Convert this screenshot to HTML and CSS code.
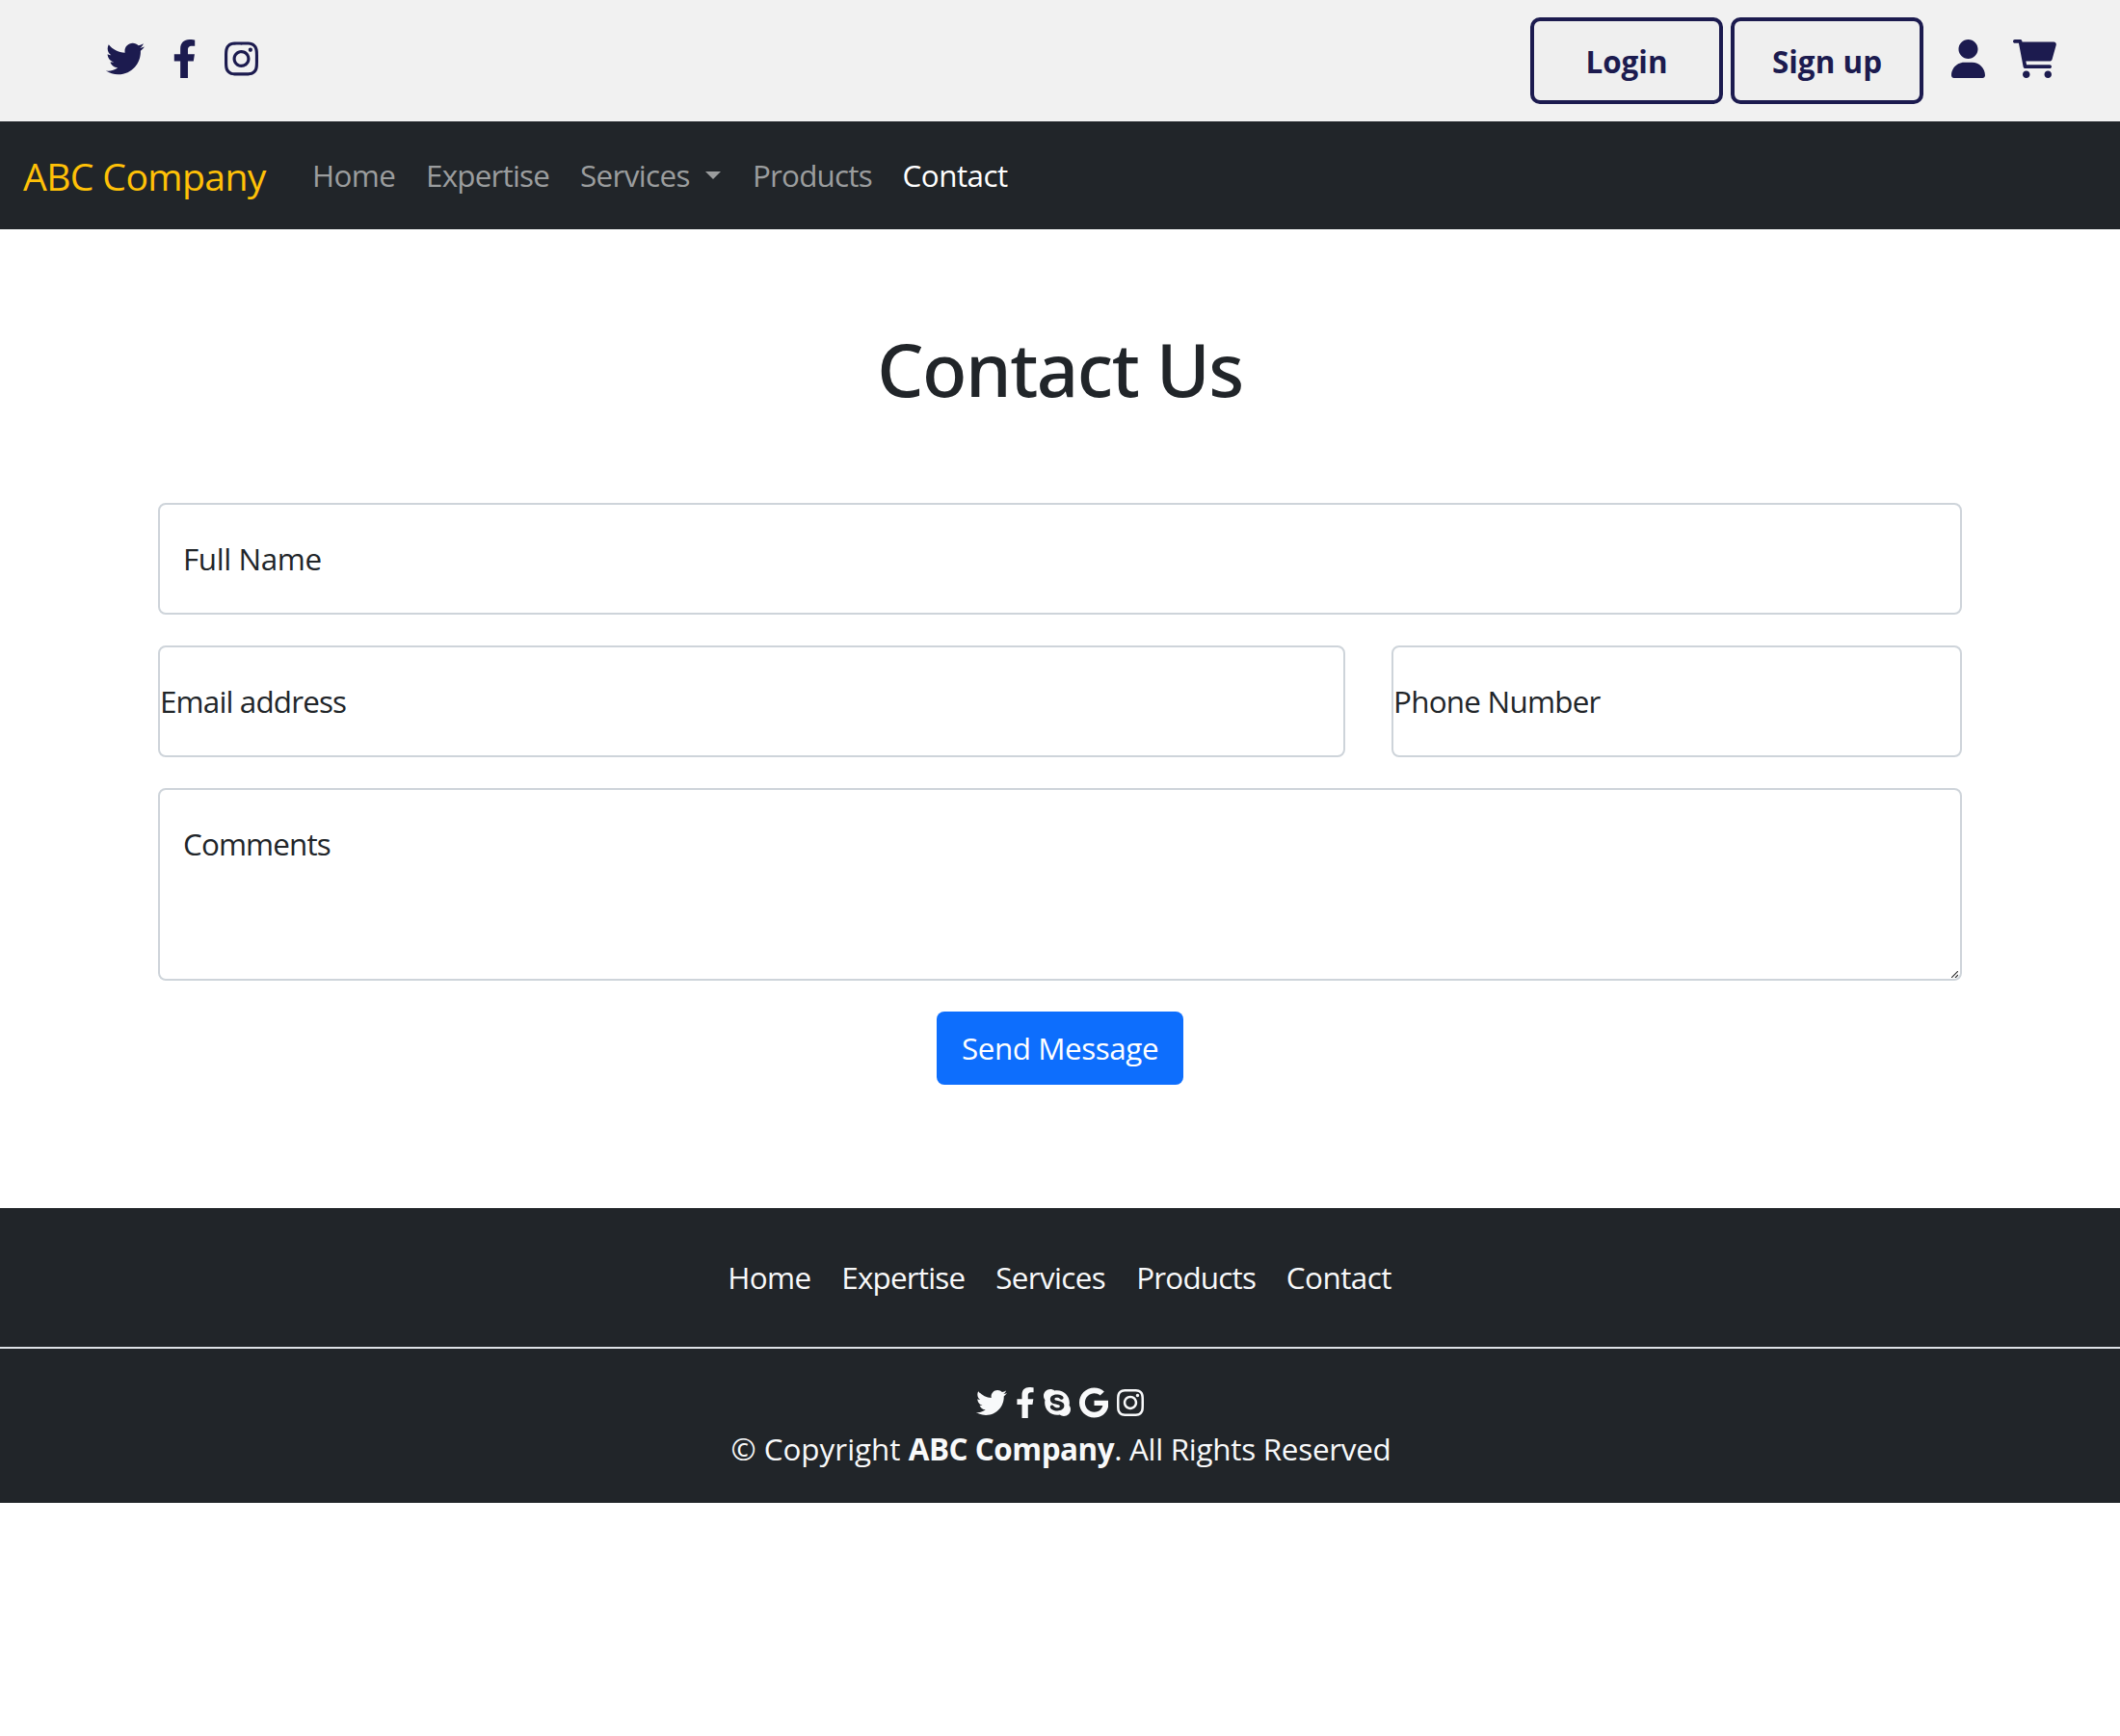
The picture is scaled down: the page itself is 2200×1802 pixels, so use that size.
FILE: index.html
```
<!DOCTYPE html>
<html lang="en">
<head>
<meta charset="utf-8">
<title>ABC Company - Contact</title>
<link rel="stylesheet" href="styles.css">
</head>
<body>
<svg class="sprite" aria-hidden="true">
  <symbol id="twitter" viewBox="0 0 512 512"><path d="M459.37 151.716c.325 4.548.325 9.097.325 13.645 0 138.72-105.583 298.558-298.558 298.558-59.452 0-114.68-17.219-161.137-47.106 8.447.974 16.568 1.299 25.34 1.299 49.055 0 94.213-16.568 130.274-44.832-46.132-.975-84.792-31.188-98.112-72.772 6.498.974 12.995 1.624 19.818 1.624 9.421 0 18.843-1.3 27.614-3.573-48.081-9.747-84.143-51.98-84.143-102.985v-1.299c13.969 7.797 30.214 12.67 47.431 13.319-28.264-18.843-46.781-51.005-46.781-87.391 0-19.492 5.197-37.36 14.294-52.954 51.655 63.675 129.3 105.258 216.365 109.807-1.624-7.797-2.599-15.918-2.599-24.04 0-57.828 46.782-104.934 104.934-104.934 30.213 0 57.502 12.67 76.67 33.137 23.715-4.548 46.456-13.32 66.599-25.34-7.798 24.366-24.366 44.833-46.132 57.827 21.117-2.273 41.584-8.122 60.426-16.243-14.292 20.791-32.161 39.308-52.628 54.253z"/></symbol>
  <symbol id="facebook" viewBox="0 0 320 512"><path d="M279.14 288l14.22-92.66h-88.91v-60.13c0-25.35 12.42-50.06 52.24-50.06h40.42V6.26S260.43 0 225.36 0c-73.22 0-121.08 44.38-121.08 124.72v70.62H22.89V288h81.39v224h100.17V288z"/></symbol>
  <symbol id="instagram" viewBox="0 0 448 512"><path d="M224.1 141c-63.6 0-114.9 51.3-114.9 114.9s51.3 114.9 114.9 114.9S339 319.5 339 255.9 287.7 141 224.1 141zm0 189.6c-41.1 0-74.7-33.5-74.7-74.7s33.5-74.7 74.7-74.7 74.7 33.5 74.7 74.7-33.6 74.7-74.7 74.7zm146.4-194.3c0 14.9-12 26.8-26.8 26.8-14.9 0-26.8-12-26.8-26.8s12-26.8 26.8-26.8 26.8 12 26.8 26.8zm76.1 27.2c-1.7-35.9-9.9-67.7-36.2-93.9-26.2-26.2-58-34.4-93.9-36.2-37-2.1-147.9-2.1-184.9 0-35.8 1.7-67.6 9.9-93.9 36.1s-34.4 58-36.2 93.9c-2.1 37-2.1 147.9 0 184.9 1.7 35.9 9.9 67.7 36.2 93.9s58 34.4 93.9 36.2c37 2.1 147.9 2.1 184.9 0 35.9-1.7 67.7-9.9 93.9-36.2 26.2-26.2 34.4-58 36.2-93.9 2.1-37 2.1-147.8 0-184.8zM398.8 388c-7.8 19.6-22.9 34.7-42.6 42.6-29.5 11.7-99.5 9-132.1 9s-102.7 2.6-132.1-9c-19.6-7.8-34.7-22.9-42.6-42.6-11.7-29.5-9-99.5-9-132.1s-2.6-102.7 9-132.1c7.8-19.6 22.9-34.7 42.6-42.6 29.5-11.7 99.5-9 132.1-9s102.7-2.6 132.1 9c19.6 7.8 34.7 22.9 42.6 42.6 11.7 29.5 9 99.5 9 132.1s2.7 102.7-9 132.1z"/></symbol>
  <symbol id="user" viewBox="0 0 448 512"><path d="M224 256c70.7 0 128-57.31 128-128s-57.3-128-128-128C153.3 0 96 57.31 96 128S153.3 256 224 256zM274.7 304H173.3C77.61 304 0 381.6 0 477.3c0 19.14 15.52 34.67 34.66 34.67h378.7C432.5 512 448 496.5 448 477.3C448 381.6 370.4 304 274.7 304z"/></symbol>
  <symbol id="cart" viewBox="0 0 576 512"><path d="M96 0C107.5 0 117.4 8.19 119.6 19.51L121.1 32H541.8C562.1 32 578.3 52.25 572.6 72.66L518.6 264.7C514.7 278.5 502.1 288 487.8 288H170.7L179.9 336H488C501.3 336 512 346.7 512 360C512 373.3 501.3 384 488 384H159.1C148.5 384 138.6 375.8 136.4 364.5L76.14 48H24C10.75 48 0 37.25 0 24C0 10.75 10.75 0 24 0H96zM128 464C128 437.5 149.5 416 176 416C202.5 416 224 437.5 224 464C224 490.5 202.5 512 176 512C149.5 512 128 490.5 128 464zM512 464C512 490.5 490.5 512 464 512C437.5 512 416 490.5 416 464C416 437.5 437.5 416 464 416C490.5 416 512 437.5 512 464z"/></symbol>
  <symbol id="skype" viewBox="0 0 448 512"><path d="M424.7 299.8c2.9-14 4.7-28.9 4.7-43.8 0-113.5-91.9-205.3-205.3-205.3-14.9 0-29.7 1.7-43.8 4.7C161.3 40.7 137.7 32 112 32 50.2 32 0 82.2 0 144c0 25.7 8.7 49.3 23.3 68.2-2.9 14-4.7 28.9-4.7 43.8 0 113.5 91.9 205.3 205.3 205.3 14.9 0 29.7-1.7 43.8-4.7 19 14.6 42.6 23.3 68.2 23.3 61.8 0 112-50.2 112-112 .1-25.6-8.6-49.2-23.2-68.1zm-194.6 91.5c-65.6 0-120.5-29.2-120.5-65 0-16 9-30.6 29.5-30.6 31.2 0 34.1 44.9 88.1 44.9 25.7 0 42.3-11.4 42.3-26.3 0-18.7-16-21.6-42-28-62.5-15.4-117.8-22-117.8-87.2 0-59.2 58.6-81.1 109.1-81.1 55.1 0 110.8 21.9 110.8 55.4 0 16.9-11.4 31.8-30.3 31.8-28.3 0-29.2-33.5-75-33.5-25.7 0-42 7-42 22.5 0 19.8 20.8 21.8 69.1 33 41.4 9.3 90.7 26.8 90.7 77.6 0 59.1-57.1 86.5-112 86.5z"/></symbol>
  <symbol id="google" viewBox="0 0 488 512"><path d="M488 261.8C488 403.3 391.1 504 248 504 110.8 504 0 393.2 0 256S110.8 8 248 8c66.8 0 123 24.5 166.3 64.9l-67.5 64.9C258.5 52.6 94.3 116.6 94.3 256c0 86.5 69.1 156.6 153.7 156.6 98.2 0 135-70.4 140.8-106.9H248v-85.3h236.1c2.3 12.7 3.9 24.9 3.9 41.4z"/></symbol>
</svg>

<header class="topbar">
  <div class="social">
    <svg class="icon w512"><use href="#twitter"/></svg>
    <svg class="icon w320"><use href="#facebook"/></svg>
    <svg class="icon w448"><use href="#instagram"/></svg>
  </div>
  <div class="account">
    <button class="outline login">Login</button>
    <button class="outline signup">Sign up</button>
    <svg class="icon w448 user"><use href="#user"/></svg>
    <svg class="icon w576 cart"><use href="#cart"/></svg>
  </div>
</header>

<nav class="navbar">
  <a class="brand">ABC Company</a>
  <div class="links">
    <a class="home">Home</a>
    <a class="expertise">Expertise</a>
    <a class="services">Services<span class="caret"></span></a>
    <a class="products">Products</a>
    <a class="contact active">Contact</a>
  </div>
</nav>

<main class="main">
  <h1 class="title">Contact Us</h1>
  <form class="form">
    <input class="field name" type="text" placeholder="Full Name">
    <div class="row">
      <input class="field email" type="email" placeholder="Email address">
      <input class="field phone" type="tel" placeholder="Phone Number">
    </div>
    <div class="comments-wrap">
      <textarea class="field comments" placeholder="Comments"></textarea>
      <svg class="grip" viewBox="0 0 7 7"><path d="M0 7l7-7M4 7l3-3"/></svg>
    </div>
    <button class="send" type="button">Send Message</button>
  </form>
</main>

<footer class="footer">
  <div class="footer-links">
    <a class="home">Home</a>
    <a class="expertise">Expertise</a>
    <a class="services">Services</a>
    <a class="products">Products</a>
    <a class="contact">Contact</a>
  </div>
  <div class="footer-bottom">
    <div class="footer-social">
      <svg class="icon w512"><use href="#twitter"/></svg>
      <svg class="icon w320"><use href="#facebook"/></svg>
      <svg class="icon w448"><use href="#skype"/></svg>
      <svg class="icon w488"><use href="#google"/></svg>
      <svg class="icon w448"><use href="#instagram"/></svg>
    </div>
    <p class="copyright">© Copyright <strong class="company">ABC Company</strong><span class="rights">. All Rights Reserved</span></p>
  </div>
</footer>
</body>
</html>
```
FILE: styles.css
```
* { box-sizing: border-box; }

body {
  margin: 0;
  background: #fff;
  color: #212529;
  font: 400 31.4px/48px "Open Sans", "Noto Sans", sans-serif;
}

.sprite { display: none; }

/* Icons are sized in em so that each keeps its glyph's own width */
.icon { height: 1em; fill: currentColor; flex: none; display: block; }
.w320 { width: .625em; }
.w448 { width: .875em; }
.w488 { width: .953em; }
.w512 { width: 1em; }
.w576 { width: 1.125em; }

.topbar {
  height: 126px;
  padding: 0 66px 0 110px;
  display: flex;
  justify-content: space-between;
  background: #f1f1f1;
  color: #1c1b4f;
}
.social { display: flex; gap: 28.8px; padding-top: 41px; font-size: 40px; }
.account { display: flex; padding-top: 18px; }
.outline {
  width: 200px;
  height: 90px;
  margin-right: 8px;
  padding: 2px 0 0;
  border: 4px solid #1c1b4f;
  border-radius: 10px;
  background: #efefef;
  color: inherit;
  font: 700 31.4px/48px "Open Sans", sans-serif;
}
.signup { margin-right: 29px; letter-spacing: .05px; }
.account .icon { font-size: 40px; margin-top: 23px; }
.user { margin-right: 29px; }

.navbar {
  height: 112px;
  padding-left: 24px;
  display: flex;
  align-items: center;
  background: #212529;
  color: #9b9d9e;
}
.brand {
  width: 300px;
  padding-top: 2px;
  color: #ffc107;
  font-size: 39.2px;
  letter-spacing: -.65px;
}
.links { display: grid; grid-template-columns: 118px 160px 179px 155.5px auto; }
.home { letter-spacing: -.6px; }
.expertise { letter-spacing: -.8px; }
.services { letter-spacing: -.63px; }
.products { letter-spacing: -.8px; }
.contact { letter-spacing: -.5px; }
.active { color: #fff; }
.caret {
  display: inline-block;
  margin-left: 16px;
  vertical-align: 8px;
  border: 8px solid transparent;
  border-top-color: currentColor;
  border-bottom: 0;
}

.main { height: 1016px; padding: 97px 164px 0; }
.title {
  margin: 0 0 91px;
  text-align: center;
  font: 500 76px/96px "Noto Sans", sans-serif;
  letter-spacing: -1.47px;
}
.form { display: flex; flex-direction: column; gap: 32px; }
.row { display: grid; grid-template-columns: 1232px 592px; gap: 48px; }
.field {
  display: block;
  width: 100%;
  height: 116px;
  margin: 0;
  border: 2px solid #ced4da;
  border-radius: 8px;
  background: #fff;
  font: inherit;
  outline: 0;
}
.field::placeholder { color: #212529; opacity: 1; }
.name { padding: 0 24px 2px; letter-spacing: -.4px; }
.email { padding: 0 0 2px; letter-spacing: -.85px; }
.phone { padding: 0 0 2px; letter-spacing: -.75px; }
.comments-wrap { position: relative; }
.comments { height: 200px; padding: 32px 24px; letter-spacing: -.88px; resize: none; }
.grip {
  position: absolute;
  right: 4px;
  bottom: 3px;
  width: 7px;
  height: 7px;
  fill: none;
  stroke: #333;
  stroke-width: 1.2;
}
.send {
  align-self: center;
  width: 256px;
  height: 76px;
  padding: 0;
  border: 0;
  border-radius: 8px;
  background: #0d6efd;
  color: #fff;
  font: inherit;
  letter-spacing: -.43px;
}

.footer { background: #212529; color: #f8f9fa; }
.footer-links {
  height: 146px;
  padding-top: 48px;
  padding-left: 1px;
  display: grid;
  grid-template-columns: 118px 160px 146px 155.5px 111px;
  justify-content: center;
  border-bottom: 2px solid #dee2e6;
}
.footer-bottom { height: 160px; padding-top: 32px; }
.footer-social {
  height: 48px;
  display: flex;
  align-items: center;
  justify-content: center;
  gap: 8.8px;
  font-size: 32px;
}
.copyright { margin: 0; padding-left: 2px; text-align: center; }
.company { font-weight: 700; letter-spacing: -.46px; }
.rights { letter-spacing: -.27px; }
```
